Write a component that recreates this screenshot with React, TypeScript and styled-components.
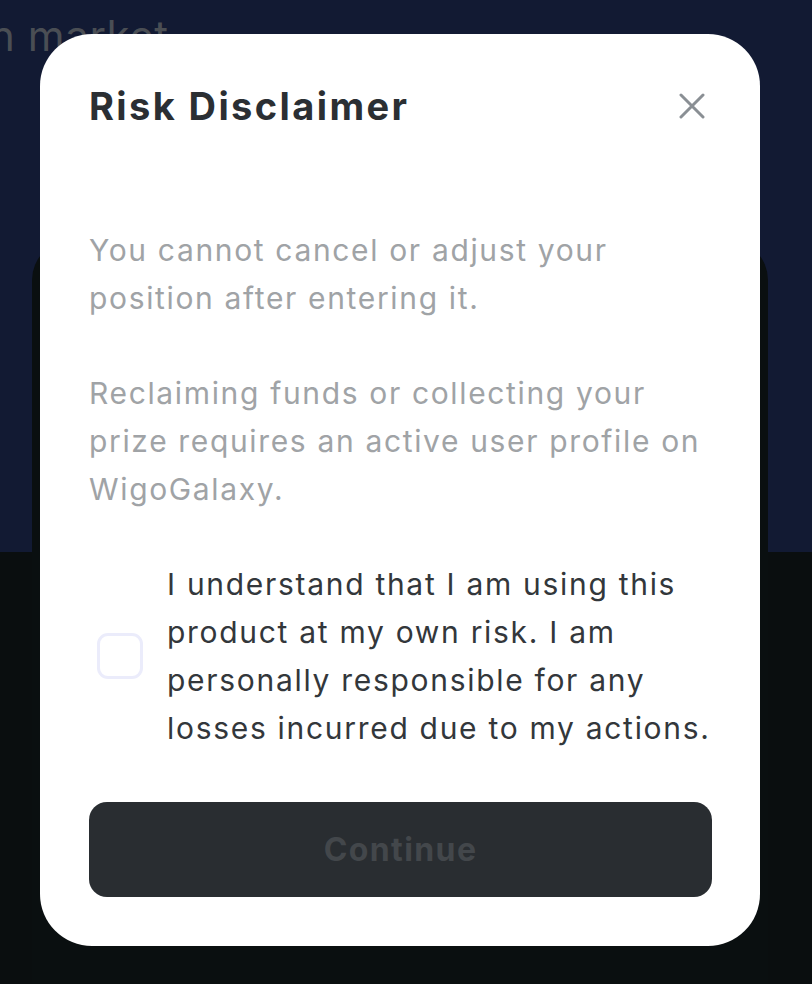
import React, { useState } from "react";
import styled, { createGlobalStyle } from "styled-components";

const Global = createGlobalStyle`
  html, body { margin: 0; padding: 0; }
  body {
    width: 812px;
    height: 984px;
    overflow: hidden;
    font-family: Inter, "Noto Sans", sans-serif;
  }
`;

const Page = styled.div`
  position: relative;
  width: 812px;
  height: 984px;
  background: linear-gradient(to bottom, #121a33 0, #121a33 552px, #0a0e0f 552px);
  overflow: hidden;
`;

const PageTitle = styled.div`
  position: absolute;
  left: -10px;
  top: 12px;
  font-size: 42px;
  line-height: 48px;
  color: #4a4e54;
  letter-spacing: 0.6px;
  white-space: nowrap;
`;

const BackCard = styled.div`
  position: absolute;
  left: 32px;
  right: 44px;
  top: 240px;
  bottom: -40px;
  background: #0a0f10;
  border-radius: 40px;
`;

const Overlay = styled.div`
  position: absolute;
  inset: 0;
  display: flex;
  justify-content: flex-start;
  align-items: flex-start;
  padding: 34px 0 0 40px;
`;

const Modal = styled.div`
  width: 720px;
  box-sizing: border-box;
  background: #ffffff;
  border-radius: 52px;
  padding: 48px 48px 49px 49px;
  display: flex;
  flex-direction: column;
`;

const Header = styled.div`
  display: flex;
  align-items: center;
  justify-content: space-between;
  height: 48px;
`;

const Title = styled.h2`
  margin: 0;
  font-size: 38px;
  font-weight: 700;
  color: #2b2f33;
  letter-spacing: 2.4px;
`;

const CloseButton = styled.button`
  border: none;
  background: none;
  padding: 0;
  width: 32px;
  height: 32px;
  margin-right: 4px;
  display: flex;
  align-items: center;
  justify-content: center;
  cursor: pointer;
`;

const Body = styled.div`
  margin-top: 96px;
  display: flex;
  flex-direction: column;
  gap: 47px;
`;

const Paragraph = styled.p`
  margin: 0;
  font-size: 30px;
  line-height: 48px;
  color: #a0a3a6;
  font-weight: 400;
  letter-spacing: 1.65px;
  white-space: nowrap;
`;

const AgreeRow = styled.label`
  display: flex;
  align-items: center;
  gap: 24px;
  padding-left: 8px;
  cursor: pointer;
`;

const Box = styled.span<{ $checked: boolean }>`
  flex: none;
  width: 46px;
  height: 46px;
  box-sizing: border-box;
  border: 3px solid #ebecfb;
  border-radius: 11px;
  background: ${(p) => (p.$checked ? "#ebecfb" : "#fff")};
`;

const AgreeText = styled.span`
  font-size: 30px;
  line-height: 48px;
  color: #33373b;
  letter-spacing: 1.7px;
  white-space: nowrap;
`;

const ContinueButton = styled.button`
  margin-top: 50px;
  height: 95px;
  width: 100%;
  border: none;
  border-radius: 18px;
  background: #292d31;
  color: #43474b;
  font-family: Inter, "Noto Sans", sans-serif;
  font-size: 32px;
  font-weight: 700;
  letter-spacing: 1.4px;
  cursor: not-allowed;
`;

export default function App() {
  const [checked, setChecked] = useState(false);
  return (
    <>
      <Global />
      <Page>
        <PageTitle>n market</PageTitle>
        <BackCard />
        <Overlay>
          <Modal>
            <Header>
              <Title>Risk Disclaimer</Title>
              <CloseButton aria-label="Close">
                <svg width="26" height="26" viewBox="0 0 26 26">
                  <path d="M2 2 L24 24 M24 2 L2 24" stroke="#8a8f94" strokeWidth="3" strokeLinecap="round" />
                </svg>
              </CloseButton>
            </Header>
            <Body>
              <Paragraph>
                You cannot cancel or adjust your
                <br />
                position after entering it.
              </Paragraph>
              <Paragraph>
                Reclaiming funds or collecting your
                <br />
                prize requires an active user profile on
                <br />
                WigoGalaxy.
              </Paragraph>
              <AgreeRow onClick={() => setChecked(!checked)}>
                <Box $checked={checked} />
                <AgreeText>
                  I understand that I am using this
                  <br />
                  product at my own risk. I am
                  <br />
                  personally responsible for any
                  <br />
                  losses incurred due to my actions.
                </AgreeText>
              </AgreeRow>
            </Body>
            <ContinueButton disabled>Continue</ContinueButton>
          </Modal>
        </Overlay>
      </Page>
    </>
  );
}
